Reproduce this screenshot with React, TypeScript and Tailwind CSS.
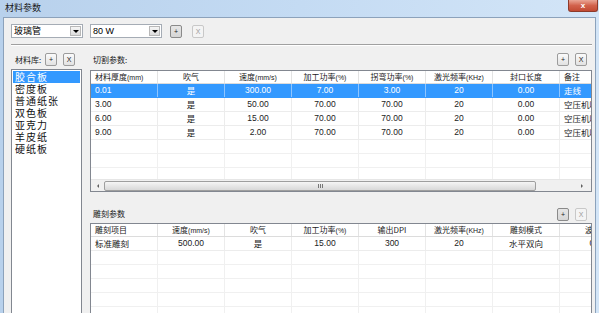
import React from "react"

const CJK = "font-['Noto_Sans_CJK_SC','Noto_Sans',sans-serif]"
const NUM = "font-['Liberation_Sans','DejaVu_Sans',sans-serif]"

type Cell = { t: string; align?: "l" | "c" }

const cutHeaders: Cell[] = [
  { t: "材料厚度(mm)", align: "l" },
  { t: "吹气" },
  { t: "速度(mm/s)" },
  { t: "加工功率(%)" },
  { t: "拐弯功率(%)" },
  { t: "激光频率(KHz)" },
  { t: "封口长度" },
  { t: "备注", align: "l" },
]

const cutRows: string[][] = [
  ["0.01", "是", "300.00", "7.00", "3.00", "20", "0.00", "走线"],
  ["3.00", "是", "50.00", "70.00", "70.00", "20", "0.00", "空压机吹"],
  ["6.00", "是", "15.00", "70.00", "70.00", "20", "0.00", "空压机吹"],
  ["9.00", "是", "2.00", "70.00", "70.00", "20", "0.00", "空压机吹"],
]

const engHeaders: Cell[] = [
  { t: "雕刻项目", align: "l" },
  { t: "速度(mm/s)" },
  { t: "吹气" },
  { t: "加工功率(%)" },
  { t: "输出DPI" },
  { t: "激光频率(KHz)" },
  { t: "雕刻模式" },
  { t: "波长" },
]

const engRows: string[][] = [["标准雕刻", "500.00", "是", "15.00", "300", "20", "水平双向", "0."]]

const materials = ["胶合板", "密度板", "普通纸张", "双色板", "亚克力", "羊皮纸", "硬纸板"]

const isCjk = (s: string) => /[\u4e00-\u9fff]/.test(s)

function SmallButton({ label, disabled, pressed }: { label: string; disabled?: boolean; pressed?: boolean }) {
  return (
    <div
      className={
        "flex h-[13px] w-[12px] items-center justify-center rounded-[2px] border text-[7px] leading-none " +
        NUM +
        " " +
        (disabled
          ? "border-[#c8c8c8] bg-[#f4f4f4] text-[#9a9a9a]"
          : pressed
            ? "border-[#8a8a8a] bg-linear-to-b from-[#e6e6e6] to-[#d6d6d6] text-[#222]"
            : "border-[#9c9c9c] bg-linear-to-b from-[#fbfbfb] to-[#e2e2e2] text-[#222]")
      }
    >
      {label}
    </div>
  )
}

function Combo({ value }: { value: string }) {
  return (
    <div className="flex h-[14px] w-[72px] border border-[#a5acb5] bg-white">
      <div className={"flex-1 pl-[2px] text-[9px] leading-[12px] text-black " + (isCjk(value) ? CJK : NUM)}>{value}</div>
      <div className="m-px flex w-[11px] items-center justify-center border border-[#b8b8b8] bg-linear-to-b from-[#f6f6f6] to-[#dcdcdc]">
        <div className="h-0 w-0 border-x-[3px] border-t-[3px] border-x-transparent border-t-black" />
      </div>
    </div>
  )
}

function HeaderText({ t }: { t: string }) {
  const m = t.match(/^(.*?)(\(.*\))$/)
  if (m) {
    return (
      <>
        <span className={CJK + " text-[8px]"}>{m[1]}</span>
        <span className={NUM + " text-[7px]"}>{m[2]}</span>
      </>
    )
  }
  return <span className={isCjk(t) ? CJK + " text-[8px]" : NUM + " text-[8px]"}>{t}</span>
}

function Grid({
  headers,
  rows,
  emptyRows,
  selected,
}: {
  headers: Cell[]
  rows: string[][]
  emptyRows: number
  selected?: number
}) {
  return (
    <div className="flex flex-col">
      <div className="flex h-[13px] shrink-0 border-b border-[#dcdcdc]">
        {headers.map((h, i) => (
          <div
            key={i}
            className={
              "flex w-[67px] shrink-0 items-center overflow-hidden whitespace-nowrap border-r border-[#e3e3e3] leading-none text-[#222] " +
              (h.align === "l" ? "justify-start pl-[4px]" : "justify-center")
            }
          >
            <HeaderText t={h.t} />
          </div>
        ))}
      </div>
      {rows.map((r, ri) => {
        const sel = ri === selected
        return (
          <div key={ri} className={"flex h-[14px] shrink-0 border-b " + (sel ? "border-[#3399ff] bg-[#3399ff]" : "border-[#ececec]")}>
            {r.map((c, ci) => {
              const left = headers[ci].align === "l"
              return (
                <div
                  key={ci}
                  className={
                    "flex w-[67px] shrink-0 items-center overflow-hidden whitespace-nowrap border-r leading-none " +
                    (sel ? "border-[#8ec5ff] text-white " : "border-[#ececec] text-[#222] ") +
                    (left ? "justify-start pl-[4px] " : "justify-center ") +
                    (isCjk(c) ? CJK : NUM) +
                    " text-[8.5px]"
                  }
                >
                  {c}
                </div>
              )
            })}
          </div>
        )
      })}
      {Array.from({ length: emptyRows }).map((_, ri) => (
        <div key={"e" + ri} className="flex h-[14px] shrink-0 border-b border-[#f0f0f0]">
          {headers.map((_, ci) => (
            <div key={ci} className="w-[67px] shrink-0 border-r border-[#f0f0f0]" />
          ))}
        </div>
      ))}
    </div>
  )
}

function HScrollbar() {
  return (
    <div className="flex h-[12px] shrink-0 items-center border-t border-[#e6e6e6] bg-[#f0f0f0]">
      <div className="flex w-[13px] items-center justify-center">
        <div className="h-0 w-0 border-y-[2px] border-r-[2px] border-y-transparent border-r-[#606060]" />
      </div>
      <div className="flex h-[10px] w-[432px] items-center justify-center rounded-[2px] border border-[#9e9e9e] bg-linear-to-b from-[#f5f5f5] to-[#d8d8d8]">
        <div className="flex gap-[1px]">
          <div className="h-[4px] w-px bg-[#777]" />
          <div className="h-[4px] w-px bg-[#777]" />
          <div className="h-[4px] w-px bg-[#777]" />
        </div>
      </div>
      <div className="flex-1" />
      <div className="mr-[6px] flex w-[6px] items-center justify-center">
        <div className="h-0 w-0 border-y-[2px] border-l-[2px] border-y-transparent border-l-[#606060]" />
      </div>
    </div>
  )
}

export default function App() {
  return (
    <div className="flex h-[313px] w-[599px] flex-col overflow-hidden bg-linear-to-r from-[#b8d1ec] via-[#c4dbf3] to-[#d3e5f7]">
      {/* title bar */}
      <div className="relative h-[17px] shrink-0">
        <div className={"pl-[5px] pt-[2px] text-[9px] leading-[12px] text-[#1a1a1a] " + CJK}>材料参数</div>
        <div className="absolute right-[1px] top-0 flex h-[12px] w-[30px] items-center justify-center rounded-b-[3px] border border-t-0 border-[#8d3a2a] bg-linear-to-b from-[#e9a595] via-[#d2624c] to-[#c24a33]">
          <span className={"text-[8px] font-bold leading-none text-white " + NUM}>x</span>
        </div>
      </div>

      {/* client area */}
      <div className="ml-[3px] mr-[3px] flex flex-1 flex-col border border-[#8ca2bb] bg-[#f0f0f0] pl-[7px] pr-[3px] pt-[6px]">
        <div className="flex items-center">
          <Combo value="玻璃管" />
          <div className="w-[7px]" />
          <Combo value="80 W" />
          <div className="w-[8px]" />
          <SmallButton label="+" pressed />
          <div className="w-[10px]" />
          <SmallButton label="X" disabled />
        </div>

        <div className="mt-[6px] h-[2px] border-t border-b border-t-[#a0a0a0] border-b-white" />

        <div className="flex flex-1 pt-[7px]">
          {/* material library */}
          <div className="flex w-[72px] flex-col">
            <div className="flex h-[13px] items-center">
              <span className={"w-[34px] pl-[4px] text-[8px] leading-none text-[#222] " + CJK}>材料库:</span>
              <SmallButton label="+" />
              <div className="w-[6px]" />
              <SmallButton label="X" />
            </div>
            <div className="mt-[3px] flex-1 border border-[#828790] bg-white p-px">
              {materials.map((m, i) => (
                <div
                  key={m}
                  className={
                    "flex h-[12px] items-center pl-[2px] text-[10px] leading-none tracking-[1px] " +
                    CJK +
                    (i === 0 ? " bg-[#3399ff] text-white" : " text-[#111]")
                  }
                >
                  {m}
                </div>
              ))}
            </div>
          </div>

          {/* right side */}
          <div className="ml-[8px] flex w-[502px] flex-col">
            <div className="flex h-[13px] items-center pr-[5px]">
              <span className={"pl-[3px] text-[8px] leading-none text-[#222] " + CJK}>切割参数:</span>
              <div className="flex-1" />
              <SmallButton label="+" />
              <div className="w-[6px]" />
              <SmallButton label="X" />
            </div>
            <div className="mt-[4px] flex h-[122px] flex-col overflow-hidden border border-[#828790] bg-white">
              <div className="flex-1 overflow-hidden">
                <Grid headers={cutHeaders} rows={cutRows} emptyRows={4} selected={0} />
              </div>
              <HScrollbar />
            </div>

            <div className="mt-[15px] flex h-[14px] items-center pr-[5px]">
              <span className={"pl-[3px] text-[8px] leading-none text-[#222] " + CJK}>雕刻参数</span>
              <div className="flex-1" />
              <SmallButton label="+" pressed />
              <div className="w-[6px]" />
              <SmallButton label="X" disabled />
            </div>
            <div className="mt-[2px] flex-1 overflow-hidden border border-b-0 border-[#828790] bg-white">
              <Grid headers={engHeaders} rows={engRows} emptyRows={5} />
            </div>
          </div>
        </div>
      </div>
    </div>
  )
}
